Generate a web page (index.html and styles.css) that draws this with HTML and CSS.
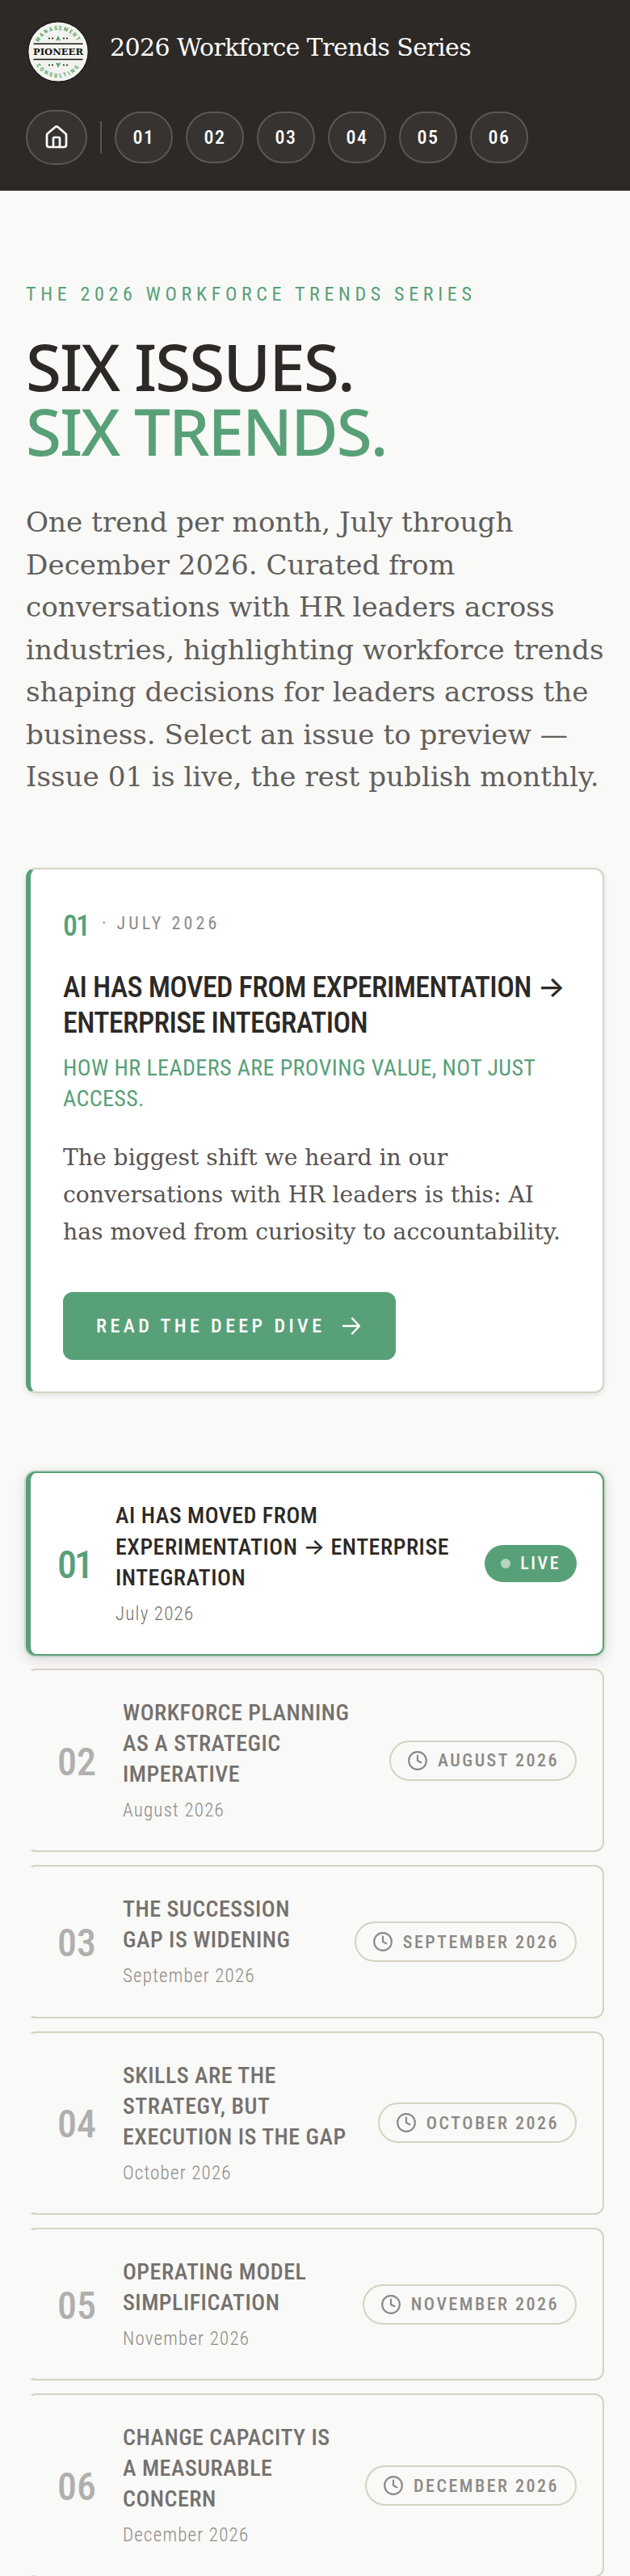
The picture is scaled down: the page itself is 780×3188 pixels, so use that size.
FILE: index.html
```html
<!doctype html>
<html lang="en">

<head>
	<meta charset="UTF-8">
	<title>2026 Workforce Trends Series</title>
	<link rel="stylesheet" href="styles.css">
</head>

<body>
	<!-- shared icons -->
	<svg class="sprite">
		<symbol id="clock" viewBox="0 0 24 24">
			<circle cx="12" cy="12" r="10" />
			<path d="M12 6v6l4 2" />
		</symbol>
	</svg>

	<header class="header">
		<div class="brand">
			<svg class="logo" viewBox="-2 -2 80 80">
				<defs>
					<path id="arc_top" d="M11 38a27 27 0 0 1 54 0" />
					<path id="arc_bottom" d="M6 38a32 32 0 0 0 64 0" />
				</defs>
				<circle cx="38" cy="38" r="37.2" fill="#f2f3ee" stroke="#161413" stroke-width="1.2" />
				<text class="logo_ring"><textPath href="#arc_top" startOffset="50%">MANAGEMENT</textPath></text>
				<text class="logo_ring logo_ring_bottom"><textPath href="#arc_bottom" startOffset="50%">CONSULTING</textPath></text>
				<path d="M7.500 28.300h61M7.500 47.500h61" stroke="#161413" stroke-width="1.6" />
				<path d="M38 18l3.200 6.600-3.200-1-3.200 1zM38 58l3.200-6.600-3.200 1-3.200-1z" fill="#58a66c" />
				<path d="M26 21.500h2M30 21.500h2M44 21.500h2M48 21.500h2M26 54.500h2M30 54.500h2M44 54.500h2M48 54.500h2" stroke="#161413" stroke-width="1.6" />
				<text class="logo_name" x="38" y="42" textLength="62" lengthAdjust="spacingAndGlyphs">PIONEER</text>
			</svg>
			<span class="brand_title">2026 Workforce Trends Series</span>
		</div>
		<nav class="nav">
			<a class="nav_home">
				<svg viewBox="0 0 24 24">
					<path d="M15 21v-8a1 1 0 0 0-1-1h-4a1 1 0 0 0-1 1v8" />
					<path d="M3 10a2 2 0 0 1 .709-1.528l7-5.999a2 2 0 0 1 2.582 0l7 5.999A2 2 0 0 1 21 10v9a2 2 0 0 1-2 2H5a2 2 0 0 1-2-2z" />
				</svg>
			</a>
			<span class="nav_line"></span>
			<a class="nav_item">01</a>
			<a class="nav_item">02</a>
			<a class="nav_item">03</a>
			<a class="nav_item">04</a>
			<a class="nav_item">05</a>
			<a class="nav_item">06</a>
		</nav>
	</header>

	<main class="main">
		<p class="eyebrow">THE 2026 WORKFORCE TRENDS SERIES</p>
		<h1>SIX ISSUES.<br><span>SIX TRENDS.</span></h1>
		<p class="intro">One trend per month, July through December 2026. Curated from conversations with HR leaders across industries, highlighting workforce trends shaping decisions for leaders across the business. Select an issue to preview — Issue 01 is live, the rest publish monthly.</p>

		<section class="feature">
			<div class="feature_meta">
				<span class="feature_num">01</span>
				<span class="feature_month">· JULY 2026</span>
			</div>
			<h2>AI HAS MOVED FROM EXPERIMENTATION <span class="arrow">→</span><br>ENTERPRISE INTEGRATION</h2>
			<p class="feature_sub">HOW HR LEADERS ARE PROVING VALUE, NOT JUST<br>ACCESS.</p>
			<p class="feature_text">The biggest shift we heard in our conversations with HR leaders is this: AI has moved from curiosity to accountability.</p>
			<a class="btn">READ THE DEEP DIVE
				<svg viewBox="0 0 24 24"><path d="M2 12h20M13 2.500l9 9.500-9 9.500" /></svg>
			</a>
		</section>

		<div class="issues">
			<article class="issue live">
				<span class="issue_num">01</span>
				<div class="issue_body">
					<h3>AI HAS MOVED FROM<br>EXPERIMENTATION <span class="arrow">→</span> ENTERPRISE<br>INTEGRATION</h3>
					<p>July 2026</p>
				</div>
				<span class="badge badge_live"><i></i>LIVE</span>
			</article>
			<article class="issue">
				<span class="issue_num">02</span>
				<div class="issue_body">
					<h3>WORKFORCE PLANNING<br>AS A STRATEGIC<br>IMPERATIVE</h3>
					<p>August 2026</p>
				</div>
				<span class="badge"><svg><use href="#clock" /></svg>AUGUST 2026</span>
			</article>
			<article class="issue">
				<span class="issue_num">03</span>
				<div class="issue_body">
					<h3>THE SUCCESSION<br>GAP IS WIDENING</h3>
					<p>September 2026</p>
				</div>
				<span class="badge"><svg><use href="#clock" /></svg>SEPTEMBER 2026</span>
			</article>
			<article class="issue">
				<span class="issue_num">04</span>
				<div class="issue_body">
					<h3>SKILLS ARE THE<br>STRATEGY, BUT<br>EXECUTION IS THE GAP</h3>
					<p>October 2026</p>
				</div>
				<span class="badge"><svg><use href="#clock" /></svg>OCTOBER 2026</span>
			</article>
			<article class="issue">
				<span class="issue_num">05</span>
				<div class="issue_body">
					<h3>OPERATING MODEL<br>SIMPLIFICATION</h3>
					<p>November 2026</p>
				</div>
				<span class="badge"><svg><use href="#clock" /></svg>NOVEMBER 2026</span>
			</article>
			<article class="issue">
				<span class="issue_num">06</span>
				<div class="issue_body">
					<h3>CHANGE CAPACITY IS<br>A MEASURABLE<br>CONCERN</h3>
					<p>December 2026</p>
				</div>
				<span class="badge"><svg><use href="#clock" /></svg>DECEMBER 2026</span>
			</article>
		</div>
	</main>
</body>

</html>
```
FILE: styles.css
```css
* {
	box-sizing: border-box;
	margin: 0;
	padding: 0;
}

body {
	background: #f9f9f7;
	color: #2d2926;
	font-family: "Roboto Condensed", Roboto, Inter, sans-serif;
}

svg {
	fill: none;
	stroke-linecap: round;
	stroke-linejoin: round;
}

.sprite {
	display: none;
}

/* header */
.header {
	height: 236px;
	padding: 24px 32px 0;
	background: #2d2926;
}

.brand {
	display: flex;
	align-items: flex-start;
	gap: 24px;
}

.logo {
	width: 80px;
	height: 80px;
	stroke-linecap: butt;
}

.logo_ring {
	fill: #58a66c;
	font: 700 7px "Roboto Condensed", Roboto, sans-serif;
	letter-spacing: 1.8px;
	text-anchor: middle;
}

.logo_ring_bottom {
	letter-spacing: 2.8px;
}

.logo_name {
	fill: #161413;
	font: 700 11px "DejaVu Serif", serif;
	text-anchor: middle;
}

.brand_title {
	margin-top: 17px;
	color: #fff;
	font: 30px/36px "DejaVu Serif", serif;
	letter-spacing: -0.6px;
}

.nav {
	display: flex;
	align-items: center;
	gap: 16px;
	margin-top: 32px;
}

.nav_home,
.nav_item {
	display: flex;
	align-items: center;
	justify-content: center;
	width: 72px;
	height: 64px;
	border: 2px solid #5b5855;
	border-radius: 32px;
	background: #373330;
	color: #fff;
	font-size: 24px;
	font-weight: 500;
	letter-spacing: 1.5px;
}

.nav_home {
	width: 76px;
	height: 68px;
	border-radius: 34px;
}

.nav_home svg {
	width: 32px;
	height: 32px;
	stroke: #fff;
	stroke-width: 2;
}

.nav_line {
	width: 2px;
	height: 40px;
	background: #575451;
}

/* intro */
.main {
	padding: 112px 32px 0;
}

.eyebrow {
	color: #58a078;
	font-size: 24px;
	font-weight: 400;
	line-height: 32px;
	letter-spacing: 5.65px;
}

h1 {
	margin-top: 33px;
	font: 500 80px/80px "Noto Sans", sans-serif;
	letter-spacing: -2px;
}

h1 span {
	color: #58a078;
}

.intro {
	margin-top: 47px;
	color: #625e5b;
	font: 34.2px/52.55px "DejaVu Serif", serif;
}

/* featured issue */
.feature {
	margin-top: 86px;
	padding: 50px 39px 39px 40px;
	border: 2px solid #d6d2c2;
	border-left: 6px solid #58a078;
	border-radius: 12px;
	background: #fff;
	box-shadow: 0 2px 6px rgba(45, 41, 38, .12);
}

.feature_meta {
	display: flex;
	gap: 16px;
	height: 40px;
}

.feature_num {
	color: #58a078;
	font-size: 36px;
	font-weight: 500;
	line-height: 40px;
	letter-spacing: -2px;
}

.feature_month {
	color: #8c8a88;
	font-size: 22px;
	font-weight: 400;
	line-height: 34px;
	letter-spacing: 4.1px;
}

h2 {
	margin-top: 33px;
	font-size: 36px;
	font-weight: 500;
	line-height: 44px;
	letter-spacing: -0.6px;
	white-space: nowrap;
}

.arrow {
	font-family: Inter, sans-serif;
}

.feature_sub {
	margin-top: 15px;
	color: #58a078;
	font-size: 28px;
	font-weight: 400;
	line-height: 38px;
	letter-spacing: 0.4px;
	white-space: nowrap;
}

.feature_text {
	margin-top: 31px;
	color: #575350;
	font: 28.2px/46px "DejaVu Serif", serif;
}

.btn {
	display: flex;
	align-items: center;
	justify-content: space-between;
	width: 412px;
	height: 84px;
	margin-top: 51px;
	padding: 0 43px 0 41px;
	border-radius: 12px;
	background: #58a078;
	color: #fff;
	font-size: 24px;
	font-weight: 500;
	letter-spacing: 4.4px;
}

.btn svg {
	width: 24px;
	height: 24px;
	stroke: #fff;
	stroke-width: 2.4;
}

/* issue list */
.issues {
	display: flex;
	flex-direction: column;
	gap: 16px;
	margin-top: 97px;
}

.issue {
	display: flex;
	align-items: center;
	padding: 34px 32px;
	border: 2px solid #d6d2c2;
	border-left: 6px solid transparent;
	border-radius: 12px;
}

.issue_num {
	width: 82px;
	padding-top: 3px;
	padding-left: 1px;
	color: #b0afad;
	font-size: 48px;
	font-weight: 500;
}

.issue_body {
	flex: 1;
	white-space: nowrap;
}

h3 {
	color: #75716e;
	font-size: 28px;
	font-weight: 500;
	line-height: 38px;
	letter-spacing: 0.5px;
}

.issue_body p {
	margin-top: 11px;
	color: #8c8a88;
	font-size: 23px;
	font-weight: 300;
	line-height: 30.33px;
	letter-spacing: 1.2px;
}

.badge {
	display: flex;
	align-items: center;
	gap: 12px;
	height: 50px;
	padding: 0 20px;
	border: 2px solid #d6d2c2;
	border-radius: 25px;
	color: #8c8a88;
	font-size: 22px;
	font-weight: 500;
	letter-spacing: 2.5px;
}

.badge svg {
	width: 26px;
	height: 26px;
	stroke: #8c8a88;
	stroke-width: 2;
}

.live {
	border-color: #58a078;
	background: #fff;
	box-shadow: 0 0 0 2px rgba(88, 160, 120, .2), 0 4px 16px rgba(45, 41, 38, .18);
}

.live .issue_num {
	width: 73px;
	color: #58a078;
	letter-spacing: -3px;
}

.live h3 {
	color: #2d2926;
}

.live p {
	color: #75716e;
}

.badge_live {
	height: 46px;
	border: 0;
	background: #58a078;
	color: #fff;
}

.badge_live i {
	width: 12px;
	height: 12px;
	border-radius: 50%;
	background: #b4d5c2;
}
```
